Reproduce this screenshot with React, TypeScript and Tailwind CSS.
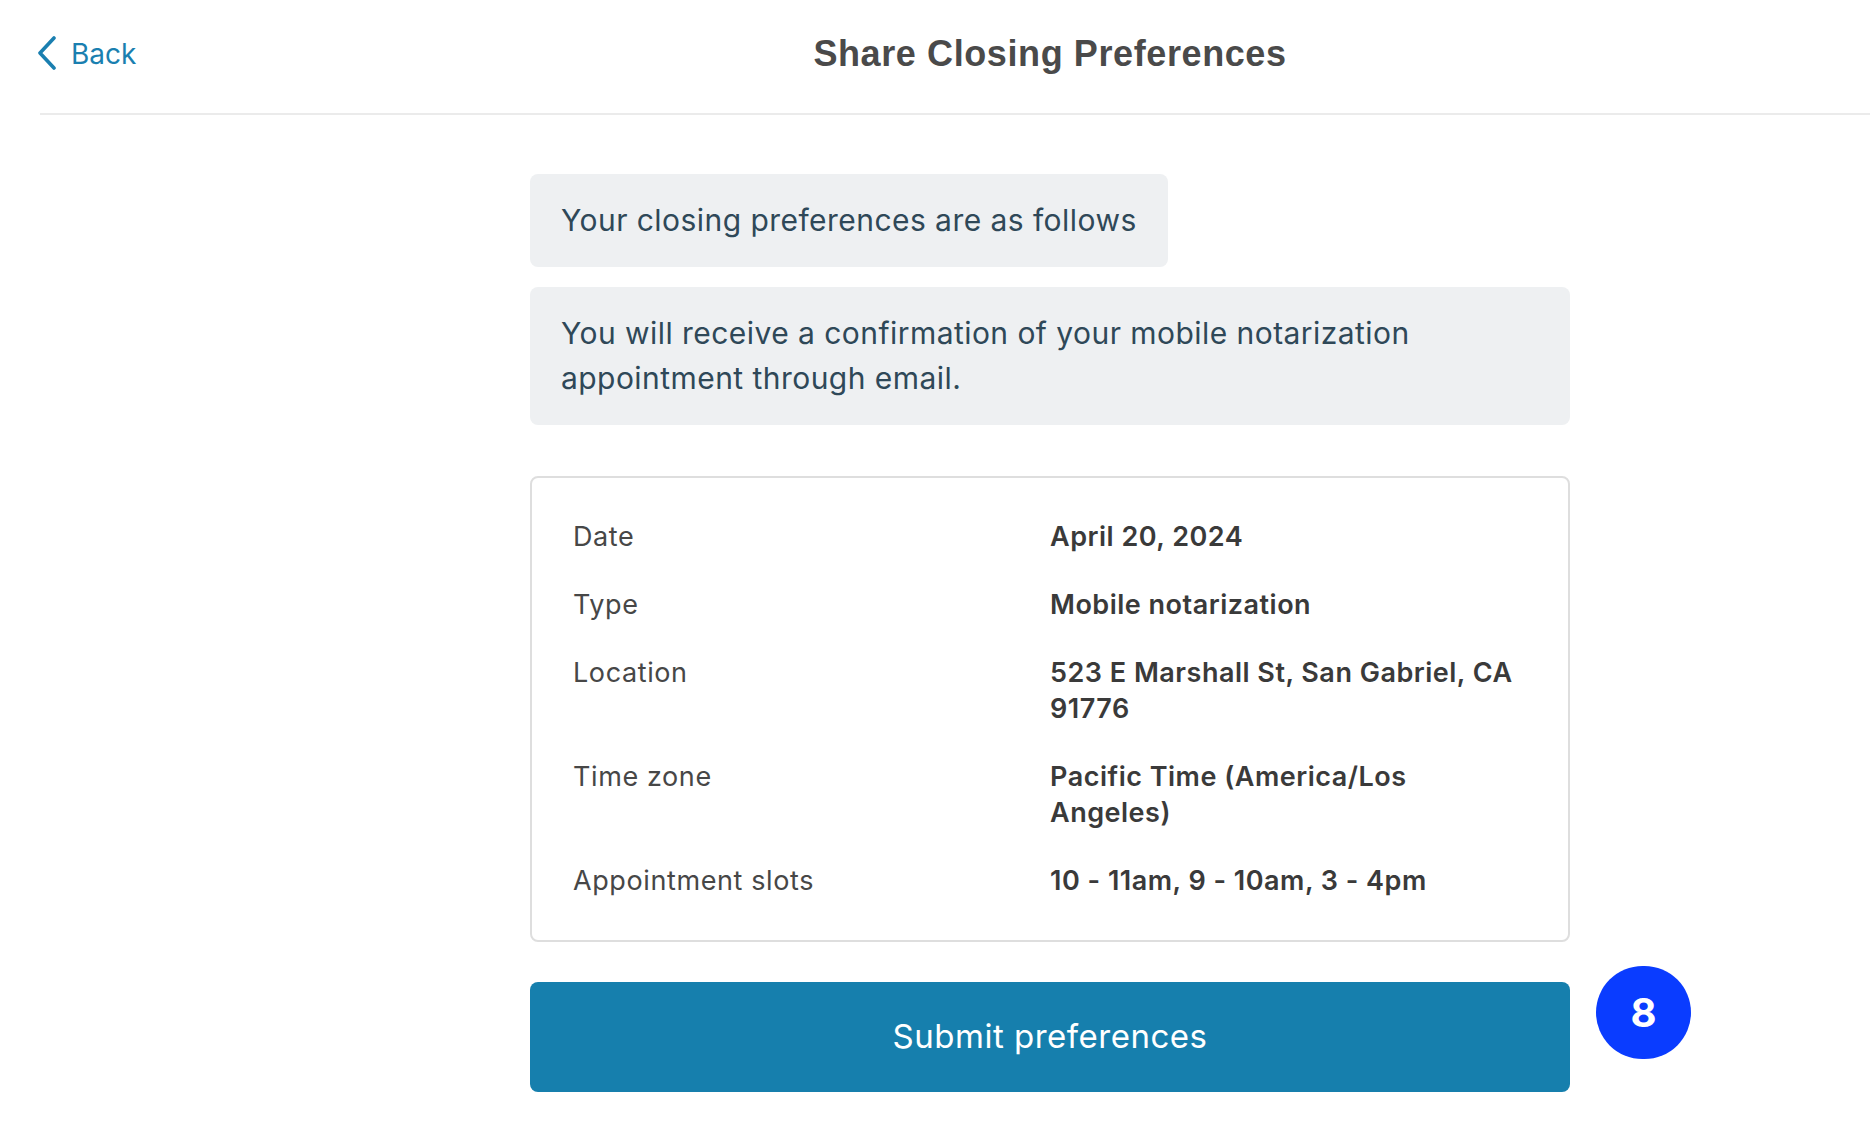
const details = [
  { label: 'Date', value: 'April 20, 2024' },
  { label: 'Type', value: 'Mobile notarization' },
  { label: 'Location', value: '523 E Marshall St, San Gabriel, CA 91776' },
  { label: 'Time zone', value: 'Pacific Time (America/Los Angeles)' },
  { label: 'Appointment slots', value: '10 - 11am, 9 - 10am, 3 - 4pm' },
];

export default function App() {
  return (
    <div className="min-h-screen bg-white font-['Inter',sans-serif]">
      <header className="ml-10 grid h-[115px] grid-cols-[490px_1040px_1fr] items-center border-b-2 border-[#ebebeb] pb-[6px]">
        <button type="button" className="flex items-center gap-[14px] text-[28px] text-[#1a7fb0]">
          <svg width="20" height="34" viewBox="0 0 20 34" fill="none" className="-ml-[3px] -mt-[2px]">
            <path d="M17 2 L3 17 L17 32" stroke="currentColor" strokeWidth="3.6" strokeLinecap="round" strokeLinejoin="round" />
          </svg>
          Back
        </button>
        <h1 className="text-center font-['Liberation_Sans',sans-serif] text-[36px] font-bold tracking-[0.6px] text-[#4a4a4a]">
          Share Closing Preferences
        </h1>
      </header>

      <main className="ml-10 grid grid-cols-[490px_1040px_1fr] pt-[59px]">
        <div />
        <div className="flex flex-col">
          <div className="w-fit rounded-lg bg-[#eef0f2] px-[31px] py-6 text-[30px] leading-[45px] tracking-[0.45px] text-[#2f4858]">
            Your closing preferences are as follows
          </div>
          <div className="mt-5 rounded-lg bg-[#eef0f2] px-[31px] py-6 text-[30px] leading-[45px] tracking-[0.45px] text-[#2f4858]">
            You will receive a confirmation of your mobile notarization appointment through email.
          </div>

          <section className="mt-[51px] rounded-lg border-2 border-[#dedede] px-[41px] py-[41px]">
            <div className="grid grid-cols-2 gap-y-[32px] text-[27px] leading-[36px]">
              {details.map((row) => (
                <div key={row.label} className="contents">
                  <div className="tracking-[0.6px] text-[#474747]">{row.label}</div>
                  <div className="pr-1 font-semibold tracking-[0.5px] text-[#3a3a3a]">{row.value}</div>
                </div>
              ))}
            </div>
          </section>

          <div className="relative mt-10">
            <button
              type="button"
              className="flex h-[110px] w-full items-center justify-center rounded-lg bg-[#167fad] text-[33px] tracking-[0.5px] text-white"
            >
              Submit preferences
            </button>
            <div className="absolute -top-[16px] left-[1066px] grid h-[93px] w-[95px] place-items-center rounded-full bg-[#0a3cff] text-[40px] font-bold text-white">
              8
            </div>
          </div>
        </div>
      </main>
    </div>
  );
}
